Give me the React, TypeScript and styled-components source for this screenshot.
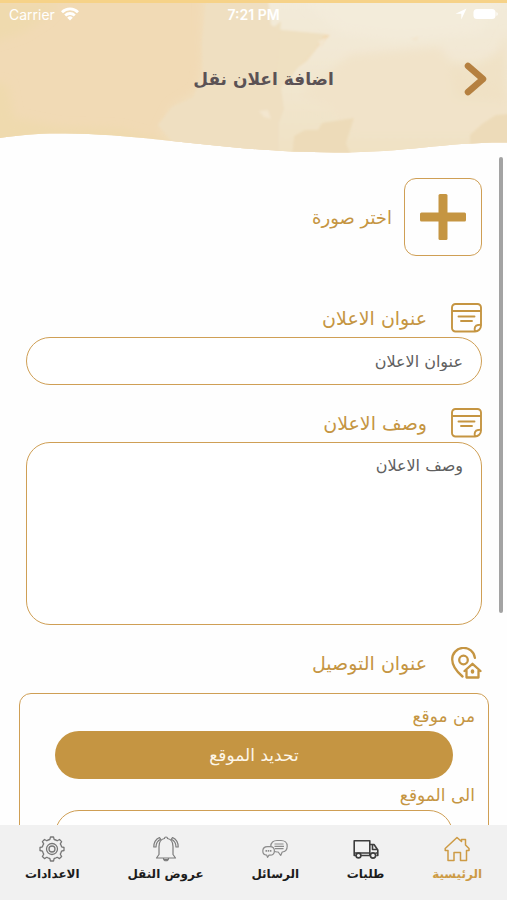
import React from "react";
import styled, { createGlobalStyle } from "styled-components";

const gold = "#c59542";
const line = "#cf9f55";

const GlobalStyle = createGlobalStyle`
  *, *::before, *::after { box-sizing: border-box; }
  body {
    margin: 0;
    background: #fefefe;
    font-family: "DejaVu Sans", sans-serif;
  }
  button, input, textarea { font: inherit; }
`;

const Screen = styled.div`
  display: flex;
  flex-direction: column;
  height: 100vh;
  overflow: hidden;
`;

const Header = styled.header`
  position: relative;
  flex: none;
  height: 155px;
  border-top: 3px solid #f6d288;
`;

const Backdrop = styled.svg`
  position: absolute;
  inset: 0;
  width: 100%;
  height: 100%;
`;

const StatusBar = styled.div`
  position: relative;
  display: grid;
  grid-template-columns: 1fr auto 1fr;
  align-items: center;
  height: 22px;
  padding: 0 9px;
  color: #ffffff;
  font-family: Inter, "Liberation Sans", sans-serif;
  font-size: 14px;
`;

const StatusSide = styled.div<{ $end?: boolean }>`
  display: flex;
  align-items: center;
  justify-content: ${(p) => (p.$end ? "flex-end" : "flex-start")};
  gap: 6px;
`;

const Clock = styled.span`
  font-weight: 600;
`;

const TitleRow = styled.div`
  position: relative;
  display: grid;
  grid-template-columns: 44px 1fr 44px;
  align-items: center;
  height: 56px;
  margin-top: 26px;
  padding: 0 10px;
`;

const Title = styled.h1`
  grid-column: 2;
  margin: 0;
  padding-left: 20px;
  text-align: center;
  color: #5b5255;
  font-size: 17px;
  line-height: 28px;
`;

const BackButton = styled.button`
  display: flex;
  justify-content: center;
  padding: 0;
  border: 0;
  background: none;
  cursor: pointer;
`;

const Body = styled.div`
  position: relative;
  flex: 1;
  min-height: 0;
`;

const ScrollArea = styled.main`
  height: 100%;
  padding: 23px 25px 0 26px;
  overflow-y: auto;
  scrollbar-width: none;
`;

const ScrollThumb = styled.div`
  position: absolute;
  top: 2px;
  right: 4px;
  width: 4px;
  height: 68%;
  border-radius: 2px;
  background: #a3a3a3;
`;

const PhotoPicker = styled.button`
  display: flex;
  align-items: center;
  gap: 12px;
  padding: 0;
  border: 0;
  background: none;
  color: ${gold};
  font-size: 18px;
  cursor: pointer;
`;

const PhotoFrame = styled.span`
  display: flex;
  align-items: center;
  justify-content: center;
  width: 78px;
  height: 78px;
  border: 1px solid ${line};
  border-radius: 12px;
`;

const Field = styled.div<{ $gap: number }>`
  margin-top: ${(p) => p.$gap}px;
`;

const FieldLabel = styled.label`
  display: flex;
  align-items: center;
  gap: 24px;
  height: 32px;
  margin-bottom: 3px;
  color: ${gold};
  font-size: 19px;
`;

const TextInput = styled.input`
  display: block;
  width: 100%;
  height: 48px;
  padding: 0 18px;
  border: 1px solid ${line};
  border-radius: 24px;
  background: #ffffff;
  color: #606060;
  font-size: 16px;
  &::placeholder { color: #606060; opacity: 1; }
`;

const TextBox = styled.textarea`
  display: block;
  width: 100%;
  height: 183px;
  padding: 11px 18px;
  border: 1px solid ${line};
  border-radius: 24px;
  background: #ffffff;
  color: #606060;
  font-size: 16px;
  line-height: 24px;
  resize: none;
  &::placeholder { color: #606060; opacity: 1; }
`;

const SectionTitle = styled(FieldLabel).attrs({ as: "h2" })`
  margin: 22px 0 14px;
  font-weight: 400;
`;

const LocationPanel = styled.section`
  margin: 0 -7px;
  padding: 10px 13px 32px;
  border: 1px solid ${line};
  border-radius: 12px;
`;

const LocationLabel = styled.label`
  display: block;
  height: 27px;
  color: ${gold};
  font-size: 17px;
  line-height: 24px;
`;

const LocationBody = styled.div`
  padding: 0 22px;
  margin-bottom: 4px;
`;

const PrimaryButton = styled.button`
  display: block;
  width: 100%;
  height: 48px;
  border: 0;
  border-radius: 24px;
  background: ${gold};
  color: #fdf6e8;
  font-size: 17px;
  cursor: pointer;
`;

const TabBar = styled.nav`
  display: flex;
  flex: none;
  justify-content: space-between;
  height: 75px;
  padding: 11px 25px 0;
  background: #f1f1f1;
`;

const Tab = styled.a<{ $active?: boolean }>`
  display: flex;
  flex-direction: column;
  align-items: center;
  gap: 2px;
  color: ${(p) => (p.$active ? "#cd9b45" : "#1c1c1c")};
  font-size: 12px;
  font-weight: 700;
  line-height: 20px;
  text-decoration: none;
  white-space: nowrap;
`;

const NoteIcon = () => (
  <svg width="31" height="30" viewBox="0 0 31 30" fill="none" stroke={gold} strokeWidth="1.9" strokeLinecap="round" strokeLinejoin="round" aria-hidden="true">
    <path d="M24 28.500H4.500a3.500 3.500 0 0 1-3.500-3.500V4.500a3.500 3.500 0 0 1 3.500-3.500h22A3.500 3.500 0 0 1 30 4.500V22.500a6 6 0 0 1-6 6c-1-3 0-6.500 3-6.500 2 0 3-.5 3-1.500M1 8h29M7.500 13.500h16M10 18h11" />
  </svg>
);

const PinHomeIcon = () => (
  <svg width="31" height="32" viewBox="0 0 31 32" fill="none" stroke={gold} strokeWidth="2.300" strokeLinecap="round" strokeLinejoin="round" aria-hidden="true">
    <path d="M11.500 29.500C5 24 1.200 18 1.200 12.500a11.400 11.400 0 0 1 22.700-1.700" />
    <circle cx="12.500" cy="13" r="4.300" />
    <path d="M13.500 24 21.500 16.800 29.500 24M15.500 23.500v7h12v-7" />
    <path d="M21.500 24v1" strokeWidth="3.500" />
  </svg>
);

const HomeIcon = () => (
  <svg width="26" height="26" viewBox="0 0 26 26" fill="none" stroke="#cd9b45" strokeWidth="1.500" strokeLinejoin="round" aria-hidden="true">
    <path d="M4 14.500H1.200V12.500L13 1.500l4.500 4V3.500h4v5.500l3.500 3.500v2H22.500V24.500h-6v-8H10v8H4Z" />
  </svg>
);

const TruckIcon = () => (
  <svg width="26" height="26" viewBox="0 0 26 26" fill="none" stroke="#3d3d3d" strokeWidth="1.600" strokeLinejoin="round" aria-hidden="true">
    <path d="M3 19.500H1.200V4.800h15.600v14.700M8 19.500h9M16.800 8.500h4.200l3.800 5.500v5.500h-1.500M1.200 17h15.600M19.500 9v4.500H24M22.500 17H25" />
    <circle cx="5.500" cy="19.500" r="2.400" />
    <circle cx="20" cy="19.500" r="2.600" />
  </svg>
);

const ChatIcon = () => (
  <svg width="26" height="26" viewBox="0 0 26 26" fill="#f1f1f1" stroke="#8c8c8c" strokeWidth="1.200" strokeLinejoin="round" aria-hidden="true">
    <path d="M15 4.500h4c3.600 0 6.200 2.200 6.200 5.700s-2.200 5.500-5 5.800l-1.500 3.500-2.500-3.500H15c-3.600 0-6.200-2.300-6.200-5.800S11.400 4.500 15 4.500Z" />
    <path d="M12.500 8h9M12.500 10.300h9.500M13 12.600h8.500" />
    <path d="M5.500 10.700H8c2.700 0 4.400 1.700 4.400 4.200s-1.700 4.200-4.400 4.200H7l-1.500 2.200-.8-2.200C2.200 18.900.8 17.200.8 14.900c0-2.500 2-4.200 4.700-4.200Z" />
    <path d="M3.500 14.900h6" strokeWidth="1.600" strokeDasharray="1.500 .7" />
  </svg>
);

const BellIcon = () => (
  <svg width="26" height="26" viewBox="0 0 26 26" fill="none" stroke="#7b7b7b" strokeWidth="1.200" strokeLinecap="round" strokeLinejoin="round" aria-hidden="true">
    <path d="M11.500 2.500a1.500 1.500 0 0 1 3 0c4 .7 5.500 3.800 5.500 8v8l2.500 3.500H3.500L6 18.500v-8c0-4.200 1.500-7.300 5.500-8ZM10.500 22.500c.2 3 4.800 3 5 0M11.500 23.500h3" />
    <path d="M6.500 1.500C3 3 .8 7 .8 11h2.200c0-3.400 1.800-6.400 4.700-7.700ZM19.500 1.500C23 3 25.200 7 25.200 11h-2.200c0-3.400-1.800-6.400-4.700-7.700Z" />
  </svg>
);

const GearIcon = () => (
  <svg width="26" height="26" viewBox="0 0 26 26" fill="none" stroke="#777777" strokeWidth="1.300" strokeLinejoin="round" aria-hidden="true">
    <path d="M10.800 3.500 11.500 1h3l.7 2.500q1.700.4 3 1.300l2.300-1.300 2.100 2.100-1.300 2.300q.9 1.300 1.300 3l2.400.6v3l-2.500.7q-.4 1.700-1.200 3l1.300 2.300-2.100 2.100-2.300-1.300q-1.300.9-3 1.200l-.7 2.500h-3l-.7-2.500q-1.700-.3-3-1.200l-2.300 1.300-2.100-2.100 1.300-2.300q-.8-1.300-1.200-3L1 14.500v-3l2.400-.6q.4-1.700 1.300-3L3.400 5.600l2.100-2.100 2.300 1.300q1.300-.9 3-1.300Z" />
    <circle cx="13" cy="13" r="5.500" />
    <circle cx="13" cy="13" r="3" />
  </svg>
);

const tabs = [
  { label: "الرئيسية", Icon: HomeIcon, active: true },
  { label: "طلبات", Icon: TruckIcon },
  { label: "الرسائل", Icon: ChatIcon },
  { label: "عروض النقل", Icon: BellIcon },
  { label: "الاعدادات", Icon: GearIcon },
];

const HeaderArt = () => (
  <Backdrop viewBox="0 0 507 152" preserveAspectRatio="none" aria-hidden="true">
    <defs>
      <clipPath id="wave">
        <path d="M0 0H507V139.500C445 139 410 149.500 335 149.500C225 149 150 131 65 130.500C40 130 20 132 0 135Z" />
      </clipPath>
      <linearGradient id="pale" x1="0" x2="0" y1="0" y2="1">
        <stop offset="0" stopColor="#f3ebda" />
        <stop offset=".35" stopColor="#f2e8d4" />
        <stop offset="1" stopColor="#f0e1c3" />
      </linearGradient>
      <filter id="wash" x="-10%" y="-10%" width="120%" height="120%">
        <feGaussianBlur stdDeviation="5" />
      </filter>
      <filter id="edge" x="-10%" y="-10%" width="120%" height="120%">
        <feGaussianBlur stdDeviation="1" />
      </filter>
    </defs>
    <g clipPath="url(#wave)">
      <path fill="#f1dab5" d="M0 0H507V152H0Z" />
      <g filter="url(#wash)">
        <path fill="#efdaae" d="M-10 40 22 30 45 15 60 0H-10ZM-10 78 8 82 14 115 60 124 120 126 170 140V160H-10Z" />
        <path fill="#f0dfbf" d="M203 -10H320V160H190L160 128 172 104 198 88 202 62Z" />
      </g>
      <g filter="url(#edge)">
        <path fill="#efdfc1" d="M202 40 206 0H290V152H185L158 122 172 104 193 95 203 70Z" />
        <path fill="url(#pale)" d="M268 -5H510V155H278L279 120 284 106 281 85 293 68 307 58 318 44 330 32 309 30 284 28 271 22Z" />
        <path fill="#efe0c1" d="M281 18 272 26 325 31 315 45 302 58 286 82 276 72Z" />
      </g>
      <g filter="url(#wash)">
        <path fill="#f1e3c9" d="M350 52 440 44 458 70 470 85 510 92V130H350L330 105 300 92Z" />
        <path fill="#efe0c2" d="M508 28 498 50 476 62 450 60 455 95 505 98Z" opacity=".7" />
        <path fill="#f4ecdc" d="M300 -5H500L480 30 400 38 340 30Z" opacity=".6" />
      </g>
      <g filter="url(#edge)">
        <path fill="#eddbb9" d="M294 133 305 127 318 127 322 120 354 115 346 140 352 155H292ZM470 132 482 121 496 112 510 111V155H470Z" />
        <path fill="#f3e6cf" d="M259 108 268 107 271 116 264 114ZM318 38 326 35 322 45ZM410 36 419 33 417 38Z" />
      </g>
    </g>
  </Backdrop>
);

export default function App() {
  return (
    <Screen dir="rtl" lang="ar">
      <GlobalStyle />
      <Header>
        <HeaderArt />
        <StatusBar dir="ltr">
          <StatusSide>
            <span>Carrier</span>
            <svg width="18" height="14" viewBox="0 0 18 14" fill="none" stroke="#fff" strokeWidth="2.800" aria-hidden="true">
              <path d="M1 5.200a11.500 11.500 0 0 1 16 0M4.200 8.400a7 7 0 0 1 9.600 0" />
              <path d="M9 13.500 6.200 10.700a4 4 0 0 1 5.600 0Z" fill="#fff" stroke="none" />
            </svg>
          </StatusSide>
          <Clock>7:21 PM</Clock>
          <StatusSide $end>
            <svg width="12" height="12" viewBox="0 0 12 12" aria-hidden="true">
              <path d="M.5 5.800 11.500.5 6.300 11.500V5.800Z" fill="#fff" />
            </svg>
            <svg width="25" height="12" viewBox="0 0 25 12" aria-hidden="true">
              <rect x=".5" y="1" width="22" height="10" rx="3.500" fill="#fff" />
              <path d="M23.500 4v4q1.200-.5 1.200-2t-1.200-2" fill="#fff" />
            </svg>
          </StatusSide>
        </StatusBar>
        <TitleRow>
          <BackButton type="button" aria-label="رجوع">
            <svg width="24" height="34" viewBox="0 0 24 34" fill="none" stroke="#b58040" strokeWidth="6.500" strokeLinecap="round" strokeLinejoin="round" aria-hidden="true">
              <path d="M5 4 20 17 5 30" />
            </svg>
          </BackButton>
          <Title>اضافة اعلان نقل</Title>
        </TitleRow>
      </Header>

      <Body>
        <ScrollArea>
          <PhotoPicker type="button">
            <PhotoFrame>
              <svg width="46" height="46" viewBox="0 0 46 46" fill={gold} aria-hidden="true">
                <rect x="18.500" width="9" height="46" rx="1.500" />
                <rect y="18.500" width="46" height="9" rx="1.500" />
              </svg>
            </PhotoFrame>
            اختر صورة
          </PhotoPicker>

          <Field $gap={46}>
            <FieldLabel htmlFor="ad-title">
              <NoteIcon />
              عنوان الاعلان
            </FieldLabel>
            <TextInput id="ad-title" placeholder="عنوان الاعلان" />
          </Field>

          <Field $gap={22}>
            <FieldLabel htmlFor="ad-text">
              <NoteIcon />
              وصف الاعلان
            </FieldLabel>
            <TextBox id="ad-text" placeholder="وصف الاعلان" />
          </Field>

          <SectionTitle>
            <PinHomeIcon />
            عنوان التوصيل
          </SectionTitle>
          <LocationPanel>
            <LocationLabel htmlFor="from">من موقع</LocationLabel>
            <LocationBody>
              <PrimaryButton id="from" type="button">تحديد الموقع</PrimaryButton>
            </LocationBody>
            <LocationLabel htmlFor="to">الى الموقع</LocationLabel>
            <LocationBody>
              <TextInput id="to" />
            </LocationBody>
          </LocationPanel>
        </ScrollArea>
        <ScrollThumb />
      </Body>

      <TabBar>
        {tabs.map(({ label, Icon, active }) => (
          <Tab key={label} href="#" $active={active} aria-current={active ? "page" : undefined}>
            <Icon />
            {label}
          </Tab>
        ))}
      </TabBar>
    </Screen>
  );
}
